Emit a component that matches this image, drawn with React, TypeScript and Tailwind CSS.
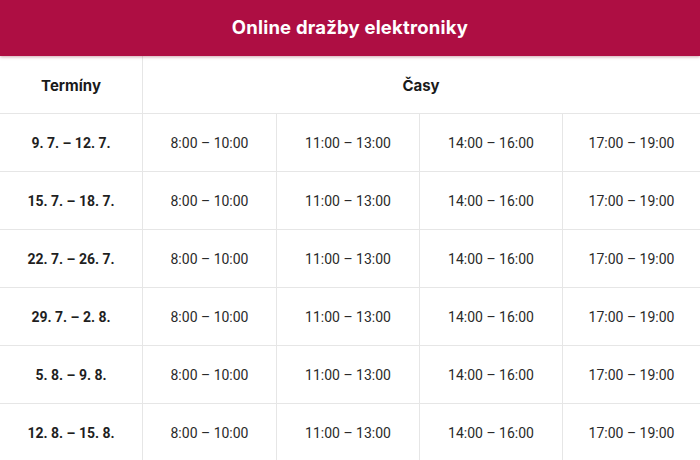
const terms = [
  "9. 7. – 12. 7.",
  "15. 7. – 18. 7.",
  "22. 7. – 26. 7.",
  "29. 7. – 2. 8.",
  "5. 8. – 9. 8.",
  "12. 8. – 15. 8.",
];

const slots = ["8:00 – 10:00", "11:00 – 13:00", "14:00 – 16:00", "17:00 – 19:00"];

export default function App() {
  return (
    <div className="w-[700px] h-[460px] overflow-hidden bg-white font-['Roboto',sans-serif]">
      {/* Title bar */}
      <div className="h-[56px] bg-[#ae0e43] flex items-center justify-center shadow-[0_1px_3px_rgba(120,0,30,0.35)] relative z-10">
        <h1 className="text-white text-[18.5px] font-bold font-['Inter',sans-serif] tracking-[0.2px] -mt-[1px]">
          Online dražby elektroniky
        </h1>
      </div>

      {/* Table */}
      <div className="grid grid-cols-[143px_134px_143px_143px_1fr]">
        <div className="h-[58px] flex items-center justify-center border-r border-b border-[#e6e6e6] text-[15px] font-bold text-[#1a1a1a] font-['Inter',sans-serif] pt-[4px]">
          Termíny
        </div>
        <div className="col-span-4 h-[58px] flex items-center justify-center border-b border-[#e6e6e6] text-[15px] font-bold text-[#1a1a1a] font-['Inter',sans-serif] -ml-[1px] pt-[4px]">
          Časy
        </div>

        {terms.map((t) => (
          <div key={t} className="contents">
            <div className="h-[58px] flex items-center justify-center border-r border-b border-[#e6e6e6] text-[14px] font-bold text-[#1f1f1f] pt-[2px]">
              {t}
            </div>
            {slots.map((s, i) => (
              <div
                key={s}
                className={
                  "h-[58px] flex items-center justify-center border-b border-[#e6e6e6] text-[14px] text-[#2a2a2a] pt-[2px] " +
                  (i < 3 ? "border-r" : "")
                }
              >
                {s}
              </div>
            ))}
          </div>
        ))}
      </div>
    </div>
  );
}
